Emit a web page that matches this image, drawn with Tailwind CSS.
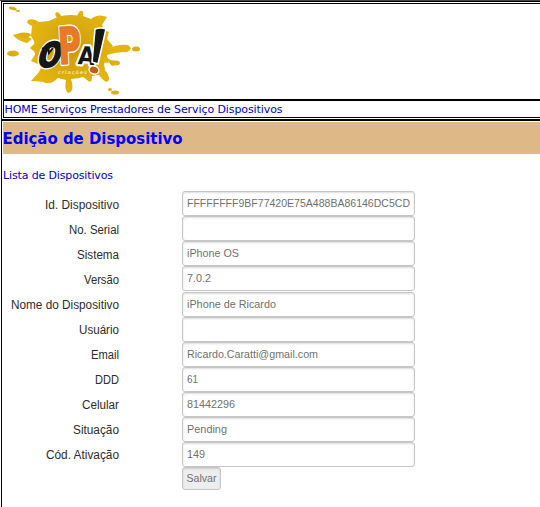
<!DOCTYPE html>
<html lang="pt-BR"><head><meta charset="utf-8"><title>Edição de Dispositivo</title>
<script src="https://cdn.jsdelivr.net/npm/@tailwindcss/browser@4"></script></head>
<body class="w-[540px] h-[507px] overflow-hidden bg-white">
<div class="h-px bg-[#444]"></div>
<div class="ml-px h-[506px] border-l border-t border-black flex flex-col">
<header class="h-[118px] shrink-0 border-b border-black pt-px pl-px pb-px">
<div class="h-[97px] border-t border-l border-b border-black">
<svg class="block" width="140" height="94" viewBox="4 4 140 94">
<defs><radialGradient id="paint" gradientUnits="userSpaceOnUse" cx="72" cy="48" r="42"><stop offset="0" stop-color="#c99a0a"/><stop offset=".7" stop-color="#dcae10"/><stop offset="1" stop-color="#e4b40f"/></radialGradient></defs>
<g fill="url(#paint)">
<ellipse cx="71" cy="47" rx="37" ry="32"/>
<path d="M31 36 32 26Q25 23 28 20Q34 18 39 22L49 21 57 18Q53 12 58 12L63 18 71 15 76 18 79 12Q84 8 83 16L91 19Q98 13 107 17L102 25 104 30 109 32 107 39 113 46 107 52 107 57 112 62 104 63 105 70Q112 79 107 82Q103 81 99 75L92 76Q92 85 87 80L82 76 75 76 71 79Q75 92 68 93Q64 90 66 80L58 78Q50 86 43 82Q37 81 31 81L39 72Q43 66 38 64L31 61 36 53 30 48 35 43Z"/>
<path d="M13 35Q20 32 32 39L27 43Q16 40 13 35ZM106 50Q116 44 128 45Q134 49 127 52Q116 52 107 55ZM106 59 120 62 112 66Z"/>
</g><g fill="#dcae10"><ellipse cx="13" cy="53.5" rx="6" ry="3"/><ellipse cx="24" cy="35" rx="7" ry="2.4"/><ellipse cx="136" cy="49" rx="4" ry="2.5"/><ellipse cx="115" cy="63" rx="5" ry="2.5"/><ellipse cx="13" cy="8.5" rx="4" ry="1.6" transform="rotate(15 13 8)"/><ellipse cx="18" cy="11" rx="2" ry="1"/><ellipse cx="110" cy="89.5" rx="2" ry="1.5"/><ellipse cx="115" cy="92.5" rx="4" ry="2"/></g>
<g font-family="'DejaVu Sans',sans-serif" font-weight="bold" stroke-linejoin="round">
<g stroke="#fff" stroke-width="4.6" fill="#fff">
<text transform="translate(36 67.5) rotate(-4) skewX(-18)" font-size="33" textLength="23" lengthAdjust="spacingAndGlyphs">O</text>
<text transform="translate(59 64) rotate(-3)" font-size="50" textLength="23" lengthAdjust="spacingAndGlyphs">P</text>
<text transform="translate(77.5 64) rotate(4)" font-size="25" textLength="17" lengthAdjust="spacingAndGlyphs">A</text></g>
<g stroke-width="1.8">
<text transform="translate(36 67.5) rotate(-4) skewX(-18)" font-size="33" textLength="23" lengthAdjust="spacingAndGlyphs" fill="#171717" stroke="#171717">O</text>
<text transform="translate(59 64) rotate(-3)" font-size="50" textLength="23" lengthAdjust="spacingAndGlyphs" fill="#e97928" stroke="#e97928">P</text>
<text transform="translate(77.5 64) rotate(4)" font-size="25" textLength="17" lengthAdjust="spacingAndGlyphs" fill="#171717" stroke="none">A</text></g>
</g>
<path d="M42 49 48 46 49 53 53 48" fill="none" stroke="#171717" stroke-width="2"/>
<path d="M95 29Q101 27 106 29L98 64 92 62Z" fill="#171717" stroke="#fff" stroke-width="1.6"/><ellipse cx="94" cy="70" rx="5" ry="4" transform="rotate(20 94 70)" fill="#c85a20" stroke="#fff" stroke-width="1.4"/>
<text x="58" y="74" font-family="'DejaVu Sans',sans-serif" font-size="5" font-weight="bold" textLength="29" fill="#f8df87">criações</text>
</svg></div>
<nav class="h-[18px] border-t border-l border-b border-black font-['DejaVu_Sans',sans-serif] text-[11px]"><svg class="block" width="300" height="16"><text x="0.5" y="12" textLength="278" fill="#0000cc">HOME Serviços Prestadores de Serviço Dispositivos</text></svg></nav>
</header>
<main class="flex-1 border-t border-black pt-px pl-px">
<h1 class="h-8 bg-[#deb887] font-['DejaVu_Sans',sans-serif] font-bold text-[16px]"><svg class="block overflow-visible" width="200" height="32"><text x="-0.5" y="22" textLength="180" lengthAdjust="spacingAndGlyphs" fill="#0000ff">Edição de Dispositivo</text></svg></h1>
<a class="block mt-[13px] h-4 font-['DejaVu_Sans',sans-serif] text-[11px]"><svg class="block" width="130" height="16"><text x="0" y="12" textLength="110" fill="#0000cc">Lista de Dispositivos</text></svg></a>
<form id="form" class="mt-[8.2px] font-['Liberation_Sans',sans-serif]"></form>
</main></div>
<script>
const rows=[["Id. Dispositivo",74,"FFFFFFFF9BF77420E75A488BA86146DC5CD",223],["No. Serial",50,"",0],["Sistema",42,"iPhone OS",52],["Versão",35,"7.0.2",24],["Nome do Dispositivo",108,"iPhone de Ricardo",89],["Usuário",40,"",0],["Email",28,"Ricardo.Caratti@gmail.com",131],["DDD",24,"61",11],["Celular",37,"81442296",48],["Situação",46,"Pending",40],["Cód. Ativação",73,"149",18]];
const text=(s,w,size,x,y,color)=>s?`<text x="${x}" y="${y}" font-size="${size}" textLength="${w}" lengthAdjust="spacingAndGlyphs" fill="${color}">${s}</text>`:"";
document.getElementById("form").innerHTML=rows.map(([a,w,b,v],i)=>`<div class="flex h-[25.1px]"><svg class="block w-[179px] h-[25px] shrink-0">${text(a,w,12,116-w,i>3?17:18,"#2c2c2c")}</svg><div class="w-[233px] h-[25px] border border-[#c6c6c6] rounded-[3px] bg-white shadow-[inset_0_1px_2px_#ddd]"><svg class="block w-full h-[23px] overflow-visible">${text(b,v,11,4,15,"#707070")}</svg></div></div>`).join("")+`<button type="button" class="block ml-[179px] w-[39px] h-[23px] border border-[#c6c6c6] rounded-[3px] bg-[#eee] shadow-[inset_0_1px_2px_#ccc]"><svg class="block w-full h-[21px]">${text("Salvar",30,11,3.5,14,"#707070")}</svg></button>`;
</script>
</body></html>
